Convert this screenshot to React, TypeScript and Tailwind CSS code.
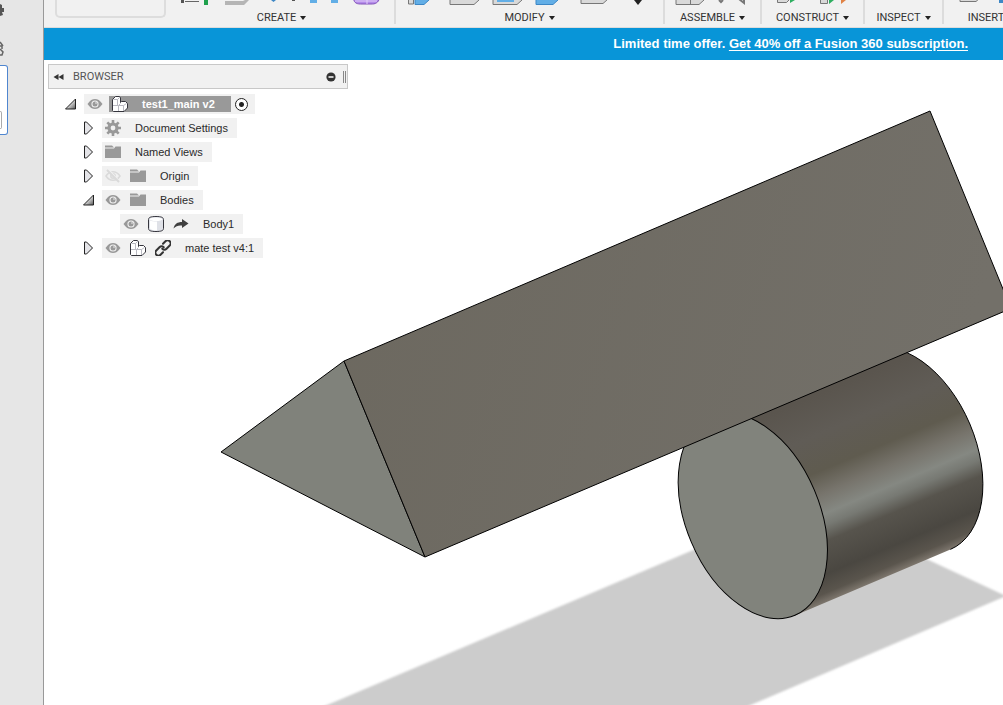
import React from 'react';

type IconName = 'eye' | 'eyeOff' | 'component' | 'gear' | 'folder' | 'body' | 'share' | 'link';

interface TreeNode {
  label: string;
  icons: IconName[];
  indent: string;
  toggle?: 'open' | 'closed';
  root?: boolean;
}

const nodes: TreeNode[] = [
  { label: 'test1_main v2', icons: ['eye', 'component'], indent: 'pl-[18px]', toggle: 'open', root: true },
  { label: 'Document Settings', icons: ['gear'], indent: 'pl-9', toggle: 'closed' },
  { label: 'Named Views', icons: ['folder'], indent: 'pl-9', toggle: 'closed' },
  { label: 'Origin', icons: ['eyeOff', 'folder'], indent: 'pl-9', toggle: 'closed' },
  { label: 'Bodies', icons: ['eye', 'folder'], indent: 'pl-9', toggle: 'open' },
  { label: 'Body1', icons: ['eye', 'body', 'share'], indent: 'pl-[72px]' },
  { label: 'mate test v4:1', icons: ['eye', 'component', 'link'], indent: 'pl-9', toggle: 'closed' },
];

const Icon = ({ name }: { name: IconName }) => (
  <svg viewBox="0 0 16 16" className="h-4 w-4 shrink-0" fill="none">
    {name === 'gear' && (
      <g stroke="#999">
        <circle cx="8" cy="8" r="4" strokeWidth="3.2" />
        <path
          d="M8 0v3M8 13v3M0 8h3M13 8h3M2.300 2.300l2.200 2.200M11.500 11.500l2.200 2.200M2.300 13.700l2.200-2.200M11.500 4.500l2.200-2.200"
          strokeWidth="2.600"
        />
      </g>
    )}
    {name === 'eye' && (
      <>
        <path d="M0.500 8C3 4.300 5.400 3 8 3s5 1.300 7.500 5C13 11.700 10.600 13 8 13S3 11.700 0.500 8Z" fill="#999" />
        <circle cx="8" cy="8" r="3.600" fill="#f1f1f1" />
        <circle cx="8" cy="8" r="2.500" fill="#999" />
        <circle cx="9" cy="7" r="0.800" fill="#f1f1f1" />
      </>
    )}
    {name === 'eyeOff' && (
      <g stroke="#dadada" strokeWidth="1.500">
        <path d="M1 8c2-3 4.500-4.300 7-4.300S13 5 15 8c-2 3-4.500 4.300-7 4.300S3 11 1 8Z" />
        <circle cx="8" cy="8" r="2.200" />
        <path d="M3.500 1.500l11 12" stroke="#f1f1f1" />
        <path d="M2 2l12 12" strokeWidth="2" />
      </g>
    )}
    {name === 'folder' && (
      <>
        <path d="M0 1.500h7l2 2H0Z" fill="#999" />
        <path d="M0 4.500h9l1.500-2H16V14H0Z" fill="#999" />
      </>
    )}
    {name === 'component' && (
      <>
        <path
          d="M0.500 3.500l3-3h4l1 1v5l1-1h4l2 2V12l-3.500 3.500h-10.500l-1-1Z"
          fill="#fff"
          stroke="#35353d"
          strokeLinejoin="round"
        />
        <path d="M1 9.500h5.500v5.500M1.500 3.500h4v5.500M5.500 3.500l2.500-2.500M6.500 9.500l2-2M7 9.500h4.500v5.500M11.500 9.500l3-2" stroke="#b9b9c1" />
      </>
    )}
    {name === 'body' && (
      <>
        <path d="M0.500 3.500c0-2 2-3 7.500-3s7.500 1 7.500 3v9c0 2-2 3-7.500 3s-7.500-1-7.500-3Z" fill="#dfe1e7" stroke="#35353d" />
        <path d="M2 4.500v8c1.500 1.500 3.500 2 7 2V5.500c-3 0-5.500-0.300-7-1Z" fill="#fff" />
        <ellipse cx="8" cy="3.200" rx="6.200" ry="1.700" fill="#fff" />
      </>
    )}
    {name === 'share' && <path d="M0.500 12.500C1.500 8 4.500 6 9 6V3l6.500 4.500L9 12V9.500C5.500 9 3 10 0.500 12.500Z" fill="#404040" />}
    {name === 'link' && (
      <g stroke="#333" strokeWidth="2" strokeLinecap="round" transform="rotate(-45 8 8)">
        <path d="M5 11H1.500a3 3 0 0 1 0-6H6a3 3 0 0 1 3 3" />
        <path d="M11 5h3.500a3 3 0 0 1 0 6H10a3 3 0 0 1-3-3" />
      </g>
    )}
  </svg>
);

const Toggle = ({ state }: { state: 'open' | 'closed' }) => (
  <button aria-label={state === 'open' ? 'Collapse' : 'Expand'} className="flex h-5 w-[18px] shrink-0 items-center">
    <svg viewBox="0 0 12 14" className="h-3.5 w-3 overflow-visible">
      <defs>
        <linearGradient id="toggle" x1="0" y1="0" x2="1" y2="1">
          <stop offset="0.4" stopColor="#eee" />
          <stop offset="1" stopColor="#555" />
        </linearGradient>
      </defs>
      {state === 'open' ? (
        <path d="M9.500 2v10H-0.500Z" fill="url(#toggle)" stroke="#222" />
      ) : (
        <path d="M0.500 1h2l6 6-6 6H0.500Z" fill="#e4e4e8" stroke="#222" />
      )}
    </svg>
  </button>
);

const TreeRow = ({ node }: { node: TreeNode }) => (
  <li className={`flex h-5 items-center ${node.indent}`}>
    {node.toggle && <Toggle state={node.toggle} />}
    {node.root ? (
      <div className="flex h-5 items-center bg-[#f1f1f1] pl-[3px] pr-[7px]">
        <Icon name="eye" />
        <span className="ml-1.5 flex h-4 items-center bg-[#999] pl-[3px] pr-4 font-bold text-white">
          <Icon name="component" />
          <span className="ml-3.5">{node.label}</span>
        </span>
        <input
          type="radio"
          defaultChecked
          aria-label="Activate component"
          className="ml-1 h-[13px] w-[13px] appearance-none rounded-full border border-[#222] bg-[radial-gradient(circle,#222_2px,#fff_3px)]"
        />
      </div>
    ) : (
      <div className="flex h-5 items-center gap-[9px] bg-[#f1f1f1] pl-[3px] pr-[9px]">
        {node.icons.map((name) => (
          <Icon key={name} name={name} />
        ))}
        <span className="ml-[5px]">{node.label}</span>
      </div>
    )}
  </li>
);

const Browser = () => (
  <section className="relative w-[304px] pl-1 pt-1 text-[11px] leading-4 text-[#2a2a2a]">
    <header className="flex h-[25px] items-center border border-[#c8c8c8] bg-[#f1f1f1] pl-1 pr-px text-[#555]">
      <button aria-label="Hide browser" className="text-[#333]">
        <svg viewBox="0 0 12 8" className="h-2 w-3" fill="currentColor">
          <path d="M5.500 1v6L0.500 4ZM10.500 1v6L5.500 4Z" />
        </svg>
      </button>
      <h2 className="ml-2 flex-1 font-[Roboto]">BROWSER</h2>
      <button aria-label="Browser options" className="mr-[7px]">
        <svg viewBox="0 0 10 10" className="h-2.5 w-2.5">
          <circle cx="5" cy="5" r="4.600" fill="#333" />
          <path d="M2.500 5h5" stroke="#fff" strokeWidth="1.500" />
        </svg>
      </button>
      <span className="h-3 w-[3px] border-x border-[#888]" />
    </header>
    <ul className="flex flex-col gap-1 pt-[5px]">
      {nodes.map((node) => (
        <TreeRow key={node.label} node={node} />
      ))}
    </ul>
  </section>
);

const Model = () => (
  <svg viewBox="44 60 959 645" preserveAspectRatio="xMinYMin slice" className="absolute inset-0 h-full w-full">
    <defs>
      <linearGradient id="side" gradientUnits="userSpaceOnUse" x1="710.700" y1="416.600" x2="794.900" y2="615.400">
        <stop offset="0.1" stopColor="#5a554e" />
        <stop offset="0.27" stopColor="#605c56" />
        <stop offset="0.43" stopColor="#5f5b4f" />
        <stop offset="0.53" stopColor="#77746c" />
        <stop offset="0.62" stopColor="#858882" />
        <stop offset="0.67" stopColor="#777973" />
        <stop offset="0.74" stopColor="#57544d" />
        <stop offset="0.88" stopColor="#4a4741" />
        <stop offset="0.96" stopColor="#5a554d" />
        <stop offset="1" stopColor="#7d766d" />
      </linearGradient>
      <linearGradient id="face" x1="0" y1="0" x2="1" y2="0.2">
        <stop offset="0" stopColor="#6c685f" />
        <stop offset="1" stopColor="#737069" />
      </linearGradient>
      <filter id="soft" x="-5%" y="-5%" width="110%" height="110%">
        <feGaussianBlur stdDeviation="1" />
      </filter>
    </defs>
    <path d="M280 725L790 509L920 556L1006 596L704 725Z" fill="#ccc" filter="url(#soft)" />
    <path d="M710.700 416.600L866.200 350.600A107.900 66.800 67 0 1 950.400 549.400L794.900 615.400Z" fill="url(#side)" />
    <path d="M866.200 350.600A107.900 66.800 67 0 1 950.400 549.400" fill="none" stroke="#000" />
    <ellipse cx="752.800" cy="516" rx="107.900" ry="66.800" transform="rotate(67 752.800 516)" fill="#81837c" stroke="#000" />
    <g stroke="#000" strokeLinejoin="round">
      <path d="M221 452L344 361L425 557Z" fill="#80827b" />
      <path d="M344 361L930 111L1011 308.500L425 557Z" fill="url(#face)" />
    </g>
  </svg>
);

const Box = ({ x, w, blue, bottom = 5 }: { x: number; w: number; blue?: boolean; bottom?: number }) => (
  <path
    d={`M${x} -6V${bottom - 0.5}H${x + w - 5}L${x + w} ${bottom - 5}V-6Z`}
    fill={blue ? '#62aee6' : '#d9d9d9'}
    stroke={blue ? '#3d87c5' : '#777'}
  />
);

const toolbarGroups = [
  {
    label: 'CREATE',
    width: 'w-[227px]',
    art: (
      <>
        <path d="M12 0h3v3h-3Z" fill="#555" />
        <path d="M16 1.500h14" stroke="#666" />
        <path d="M35 0h4v5h-4Z" fill="#1fa04c" />
        <path d="M56 1h18l2-1h4l-5 5H56Z" fill="#b5b5b5" />
        <path d="M102 0h5l-2.500 2Z" fill="#3d87c5" />
        <path d="M123 0h3v1h-3Z" fill="#555" />
        <path d="M141 0h7v3h-7ZM162 0h7v3h-7Z" fill="#62aee6" />
        <path d="M184.500 -3c0 5 2 7 7 7h12c4 0 7-3 7-7Z" fill="#b48bea" stroke="#8253b9" />
        <path d="M198 -3v7M186 1h22" stroke="#e3d0fa" />
      </>
    ),
  },
  {
    label: 'MODIFY',
    width: 'w-[269px]',
    art: (
      <>
        <path d="M12.500 -2v6h5v-6Z" fill="#d9d9d9" stroke="#777" />
        <Box x={19} w={14} blue />
        <Box x={54} w={29} />
        <Box x={97} w={29} />
        <path d="M101 0h17v2h-17Z" fill="#62aee6" />
        <Box x={140} w={22} blue />
        <Box x={185} w={27} bottom={4} />
        <path d="M238 0h8l-4 5Z" fill="#222" />
      </>
    ),
  },
  {
    label: 'ASSEMBLE',
    width: 'w-[97px]',
    art: (
      <>
        <Box x={11} w={28} />
        <path d="M25.500 0v4" stroke="#777" />
        <path d="M54 0l2 2 2-2M74 -1l5 4v-4" fill="none" stroke="#777" strokeWidth="2" />
      </>
    ),
  },
  {
    label: 'CONSTRUCT',
    width: 'w-[103px]',
    art: (
      <>
        <path d="M15.500 -2v4.500h9l4-4Z" fill="#d9d9d9" stroke="#777" />
        <path d="M28 0h5l-5 3ZM67 0h5l-5 4Z" fill="#2eae60" />
        <path d="M58.500 -2v5.500h7v-5.500Z" fill="#d9d9d9" stroke="#777" />
        <path d="M79 0h5l-5 4Z" fill="#e08244" />
      </>
    ),
  },
  { label: 'INSPECT', width: 'w-[79px]', art: null },
  {
    label: 'INSERT',
    width: 'w-24',
    art: (
      <>
        <Box x={16} w={21} bottom={2} />
        <path d="M55 0h14v3h-14Z" fill="#3d87c5" />
      </>
    ),
  },
];

const Toolbar = () => (
  <nav className="flex h-7 overflow-hidden border-b border-[#dcdcdc] bg-[#f1f1f1]">
    <div className="w-[125px] shrink-0 pl-[11px]">
      <div className="h-[18px] w-[111px] rounded-b-[5px] border-2 border-t-0 border-[#ddd]" />
    </div>
    {toolbarGroups.map((group) => (
      <div key={group.label} className={`flex h-6 shrink-0 flex-col border-r-2 border-[#dcdcdc] ${group.width}`}>
        <svg className="h-2.5 w-full shrink-0">{group.art}</svg>
        <button className="flex h-4 items-center justify-center gap-1 font-[Roboto] text-[11px] leading-4 text-[#333]">
          {group.label}
          <svg viewBox="0 0 6 4" className="h-1 w-1.5">
            <path d="M0 0h6L3 4Z" fill="#222" />
          </svg>
        </button>
      </div>
    ))}
  </nav>
);

const Sidebar = () => (
  <aside className="w-11 shrink-0 overflow-hidden border-r border-[#999] bg-[#e6e6e6]">
    <div className="flex h-[65px] flex-col">
      <svg className="h-full w-2">
        <path d="M0 4l2 1v3h2v4H2l1 3-3 1Z" fill="#555" />
        <path d="M0 42l3 4M0 46h2v3M0 49l3 3-1 3H0" fill="none" stroke="#666" strokeWidth="1.500" />
      </svg>
    </div>
    <div className="h-[70px] w-2 rounded-r-[3px] border border-l-0 border-[#4f86cf] bg-white pt-[45px]">
      <div className="h-[18px] w-0.5 rounded-r border border-l-0 border-[#aaa]" />
    </div>
  </aside>
);

const App = () => {
  return (
    <div className="flex min-h-screen bg-white font-['Liberation_Sans',Arial,sans-serif]">
      <Sidebar />
      <div className="flex min-w-0 flex-1 flex-col">
        <Toolbar />
        <div className="flex h-8 items-center justify-end bg-[#0895d8] pr-[35px] text-[13px] font-bold leading-4 text-white">
          <p>
            Limited time offer.{' '}
            <a href="#subscribe" className="underline underline-offset-2">
              Get 40% off a Fusion 360 subscription.
            </a>
          </p>
        </div>
        <main className="relative flex-1 overflow-hidden">
          <Model />
          <Browser />
        </main>
      </div>
    </div>
  );
};

export default App;
